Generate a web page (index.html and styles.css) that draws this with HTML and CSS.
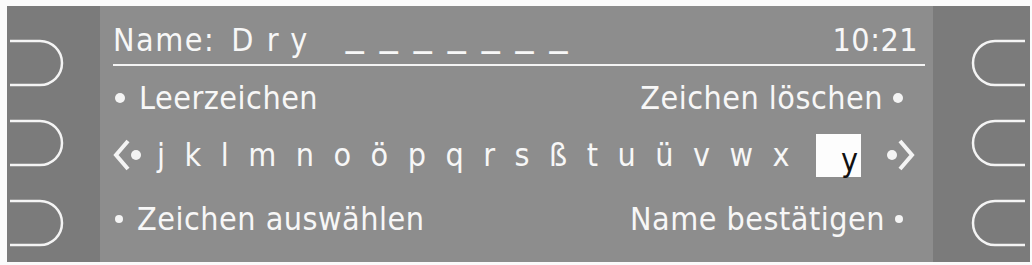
FILE: index.html
```html
<!DOCTYPE html>
<html lang="de">
<head>
<meta charset="utf-8">
<title>Name</title>
<link rel="stylesheet" href="styles.css">
</head>
<body>
<div class="device">
  <div class="side side-left">
    <svg class="bracket" width="93" height="48" viewBox="0 0 93 48"><path d="M3 2 H33 A22 22 0 0 1 33 46 H3"/></svg>
    <svg class="bracket" width="93" height="48" viewBox="0 0 93 48"><path d="M3 2 H33 A22 22 0 0 1 33 46 H3"/></svg>
    <svg class="bracket" width="93" height="48" viewBox="0 0 93 48"><path d="M3 2 H33 A22 22 0 0 1 33 46 H3"/></svg>
  </div>
  <div class="screen">
    <div class="header">
      <span class="label">Name:</span>
      <span class="ch c-d">D</span><span class="ch c-r">r</span><span class="ch c-y">y</span>
      <span class="blanks">_______</span>
      <span class="time">10:21</span>
    </div>
    <div class="rule"></div>
    <div class="row row-a">
      <span class="opt"><span class="dot"></span>Leerzeichen</span>
      <span class="opt">Zeichen löschen<span class="dot dot-r"></span></span>
    </div>
    <div class="row row-b">
      <svg class="arrow" width="34" height="34" viewBox="0 0 34 34"><path class="chev" d="M15 3 L3 17 L15 31"/><circle cx="23" cy="17" r="5"/></svg>
      <span class="letters">
        <span>j</span><span>k</span><span>l</span><span>m</span><span>n</span><span>o</span><span>ö</span><span>p</span><span>q</span><span>r</span><span>s</span><span>ß</span><span>t</span><span>u</span><span>ü</span><span>v</span><span>w</span><span>x</span>
      </span>
      <span class="sel">y</span>
      <svg class="arrow arrow-r" width="34" height="34" viewBox="0 0 34 34"><circle cx="9" cy="17" r="5"/><path class="chev" d="M17 3 L29 17 L17 31"/></svg>
    </div>
    <div class="row row-c">
      <span class="opt"><span class="dot dot-s"></span>Zeichen auswählen</span>
      <span class="opt">Name bestätigen<span class="dot dot-s dot-r"></span></span>
    </div>
  </div>
  <div class="side side-right">
    <svg class="bracket" width="97" height="48" viewBox="0 0 97 48"><path d="M92 2 H62 A22 22 0 0 0 62 46 H92"/></svg>
    <svg class="bracket" width="97" height="48" viewBox="0 0 97 48"><path d="M92 2 H62 A22 22 0 0 0 62 46 H92"/></svg>
    <svg class="bracket" width="97" height="48" viewBox="0 0 97 48"><path d="M92 2 H62 A22 22 0 0 0 62 46 H92"/></svg>
  </div>
</div>
</body>
</html>
```
FILE: styles.css
```css
html, body {
  margin: 0;
  padding: 0;
  background: #fbfbfb;
}
body {
  padding: 6px 2px 3px 7px;
  font-family: "DejaVu Sans Condensed", "Liberation Sans Narrow", "DejaVu Sans", sans-serif;
  color: #f7f7f7;
}
.device {
  display: flex;
  height: 256px;
  background: #8d8d8d;
}
.side {
  background: #7b7b7b;
  display: flex;
  flex-direction: column;
  gap: 32px;
  padding-top: 33px;
}
.side-left { width: 93px; }
.side-right { width: 97px; }
.bracket path {
  fill: none;
  stroke: #f4f4f4;
  stroke-width: 2.5;
}
.screen {
  flex: 1;
  padding: 0 8px 0 13px;
  font-size: 32px;
  line-height: 32px;
  letter-spacing: 0.5px;
}
.header {
  display: flex;
  align-items: baseline;
  padding-top: 15px;
  height: 32px;
}
.label { margin-right: 16px; letter-spacing: 1.5px; }
.c-d { margin-right: 13px; }
.c-r { margin-right: 11px; }
.c-y { margin-right: 38px; }
.blanks {
  letter-spacing: 16px;
  font-size: 40px;
  position: relative;
  top: -7px;
}
.time { margin-left: auto; margin-right: 7px; }
.rule {
  height: 2px;
  background: #f4f4f4;
  margin-top: 11px;
}
.row {
  display: flex;
  align-items: center;
  justify-content: space-between;
  height: 32px;
}
.row-a { margin-top: 16px; }
.row-b {
  margin-top: 25px;
  justify-content: flex-start;
  align-items: baseline;
}
.row-c { margin-top: 32px; }
.opt {
  display: flex;
  align-items: center;
}
.dot {
  width: 10px;
  height: 10px;
  border-radius: 50%;
  background: #f4f4f4;
  margin: 0 14px 0 2px;
}
.dot-r { margin: 0 22px 0 10px; }
.dot-s { width: 8px; height: 8px; }
.arrow { align-self: center; }
.arrow path.chev {
  fill: none;
  stroke: #f4f4f4;
  stroke-width: 4;
}
.arrow circle { fill: #f4f4f4; }
.letters {
  display: flex;
  gap: 19.5px;
  margin-left: 10px;
  letter-spacing: 0;
}
.sel {
  display: inline-block;
  width: 45px;
  height: 43px;
  box-sizing: border-box;
  padding: 10px 2px 0 0;
  background: #fdfdfd;
  color: #111;
  text-align: right;
  margin-left: 26px;
  align-self: center;
}
.arrow-r { margin-left: 22px; }
```
